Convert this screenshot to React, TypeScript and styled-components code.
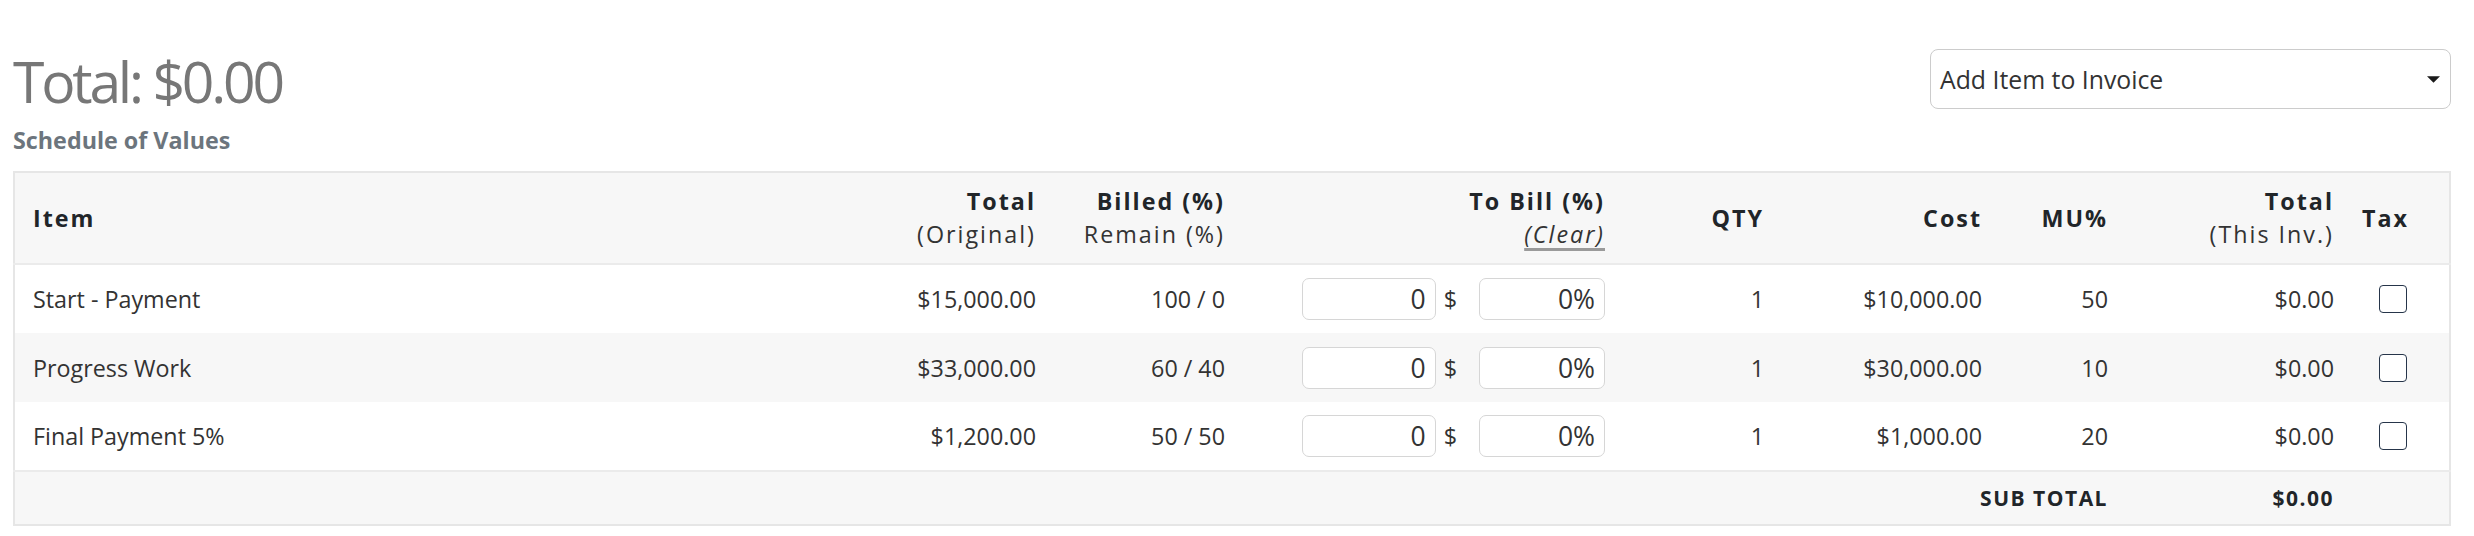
import React from "react";
import styled, { createGlobalStyle } from "styled-components";

const GlobalStyle = createGlobalStyle`
  html, body { margin: 0; padding: 0; background: #ffffff; }
  body {
    font-family: "Open Sans", "Liberation Sans", sans-serif;
    color: #333333;
  }
  * { box-sizing: border-box; }
`;

const Page = styled.div`
  padding: 47px 23px 0 13px;
`;

const TopBar = styled.div`
  display: flex;
  justify-content: space-between;
  align-items: flex-start;
`;

const TitleBlock = styled.div`
  display: flex;
  flex-direction: column;
`;

const Title = styled.h1`
  margin: 0;
  font-size: 57px;
  line-height: 68px;
  font-weight: 400;
  letter-spacing: -3.2px;
  color: #777777;
`;

const Subtitle = styled.h2`
  margin: 9px 0 0;
  font-size: 23.3px;
  line-height: 33px;
  font-weight: 700;
  color: #6c757d;
`;

const SelectBox = styled.div`
  margin-top: 2px;
  width: 521px;
  height: 60px;
  display: flex;
  align-items: center;
  justify-content: space-between;
  padding: 0 10px 0 9px;
  border: 1.5px solid #cccccc;
  border-radius: 8px;
  background: #ffffff;
  font-size: 24.8px;
  color: #333333;
`;

const Caret = styled.svg`
  width: 13px;
  height: 7px;
  flex: none;
`;

const Table = styled.table`
  width: 100%;
  margin-top: 14px;
  border-collapse: collapse;
  table-layout: fixed;
  border: 2px solid #e6e6e6;
`;

const Col = styled.col<{ $w?: number }>`
  ${(p) => (p.$w ? `width: ${p.$w}px;` : "")}
`;

const HeadRow = styled.tr`
  background: #f7f7f7;
  border-bottom: 2px solid #ebebeb;
`;

const BodyRow = styled.tr<{ $shade?: boolean }>`
  background: ${(p) => (p.$shade ? "#f7f7f7" : "#ffffff")};
`;

const FootRow = styled.tr`
  background: #f7f7f7;
  border-top: 2px solid #ebebeb;
`;

const Th = styled.th<{ $align?: "left" | "right"; $padLeft?: number }>`
  height: 92px;
  padding: 0 18px 0 ${(p) => p.$padLeft ?? 18}px;
  text-align: ${(p) => p.$align ?? "right"};
  vertical-align: middle;
  font-size: 23.3px;
  line-height: 33px;
  font-weight: 700;
  letter-spacing: 2px;
  color: #212529;
  white-space: nowrap;
`;

const SubLabel = styled.span`
  display: block;
  font-weight: 400;
  color: #333333;
`;

const ClearWrap = styled.span`
  display: block;
`;

const ClearLink = styled.a`
  font-weight: 400;
  font-style: italic;
  color: #333333;
  text-decoration: underline;
  text-decoration-color: #9a9a9a;
  text-decoration-thickness: 2.5px;
  text-underline-offset: 5px;
  cursor: pointer;
`;

const Td = styled.td<{ $align?: "left" | "right"; $padLeft?: number }>`
  height: 69px;
  padding: 0 18px 0 ${(p) => p.$padLeft ?? 18}px;
  text-align: ${(p) => p.$align ?? "right"};
  vertical-align: middle;
  font-size: 23.3px;
  color: #333333;
  white-space: nowrap;
`;

const FootCell = styled.td`
  height: 54px;
  padding: 0 18px;
  text-align: right;
  vertical-align: middle;
  font-size: 21px;
  font-weight: 700;
  letter-spacing: 1.5px;
  color: #212529;
`;

const BillInputs = styled.div`
  display: flex;
  justify-content: flex-end;
  align-items: center;
`;

const AmountInput = styled.input<{ $w: number }>`
  width: ${(p) => p.$w}px;
  height: 42px;
  padding: 0 9px;
  border: 1.5px solid #d6d6d6;
  border-radius: 7px;
  background: #ffffff;
  text-align: right;
  font-family: inherit;
  font-size: 26.5px;
  color: #333333;
  outline: none;
`;

const Dollar = styled.span`
  margin: 0 22px 0 8px;
  font-size: 23.3px;
  color: #333333;
`;

const TaxBox = styled.input`
  appearance: none;
  display: block;
  margin: 0;
  width: 28px;
  height: 28px;
  border: 1.5px solid #26354a;
  border-radius: 4px;
  background: #ffffff;
`;

type Item = {
  name: string;
  total: string;
  billed: string;
  cost: string;
  mu: string;
};

const items: Item[] = [
  { name: "Start - Payment", total: "$15,000.00", billed: "100 / 0", cost: "$10,000.00", mu: "50" },
  { name: "Progress Work", total: "$33,000.00", billed: "60 / 40", cost: "$30,000.00", mu: "10" },
  { name: "Final Payment 5%", total: "$1,200.00", billed: "50 / 50", cost: "$1,000.00", mu: "20" },
];

export default function App() {
  return (
    <>
      <GlobalStyle />
      <Page>
        <TopBar>
          <TitleBlock>
            <Title>Total: $0.00</Title>
            <Subtitle>Schedule of Values</Subtitle>
          </TitleBlock>
          <SelectBox>
            <span>Add Item to Invoice</span>
            <Caret viewBox="0 0 10 5">
              <path d="M0 0 L10 0 L5 5 Z" fill="#1a1a1a" />
            </Caret>
          </SelectBox>
        </TopBar>

        <Table>
          <colgroup>
            <Col />
            <Col $w={174} />
            <Col $w={189} />
            <Col $w={380} />
            <Col $w={159} />
            <Col $w={218} />
            <Col $w={126} />
            <Col $w={226} />
            <Col $w={98} />
          </colgroup>
          <thead>
            <HeadRow>
              <Th $align="left">Item</Th>
              <Th>
                Total
                <SubLabel>(Original)</SubLabel>
              </Th>
              <Th>
                Billed (%)
                <SubLabel>Remain (%)</SubLabel>
              </Th>
              <Th>
                To Bill (%)
                <ClearWrap>
                  <ClearLink>(Clear)</ClearLink>
                </ClearWrap>
              </Th>
              <Th>QTY</Th>
              <Th>Cost</Th>
              <Th>MU%</Th>
              <Th>
                Total
                <SubLabel>(This Inv.)</SubLabel>
              </Th>
              <Th $align="left" $padLeft={10}>
                Tax
              </Th>
            </HeadRow>
          </thead>
          <tbody>
            {items.map((it, i) => (
              <BodyRow key={it.name} $shade={i % 2 === 1}>
                <Td $align="left">{it.name}</Td>
                <Td>{it.total}</Td>
                <Td>{it.billed}</Td>
                <Td>
                  <BillInputs>
                    <AmountInput $w={134} defaultValue="0" />
                    <Dollar>$</Dollar>
                    <AmountInput $w={126} defaultValue="0%" />
                  </BillInputs>
                </Td>
                <Td>1</Td>
                <Td>{it.cost}</Td>
                <Td>{it.mu}</Td>
                <Td>$0.00</Td>
                <Td $align="left" $padLeft={27}>
                  <TaxBox type="checkbox" />
                </Td>
              </BodyRow>
            ))}
            <FootRow>
              <FootCell colSpan={7}>SUB TOTAL</FootCell>
              <FootCell>$0.00</FootCell>
              <FootCell />
            </FootRow>
          </tbody>
        </Table>
      </Page>
    </>
  );
}
